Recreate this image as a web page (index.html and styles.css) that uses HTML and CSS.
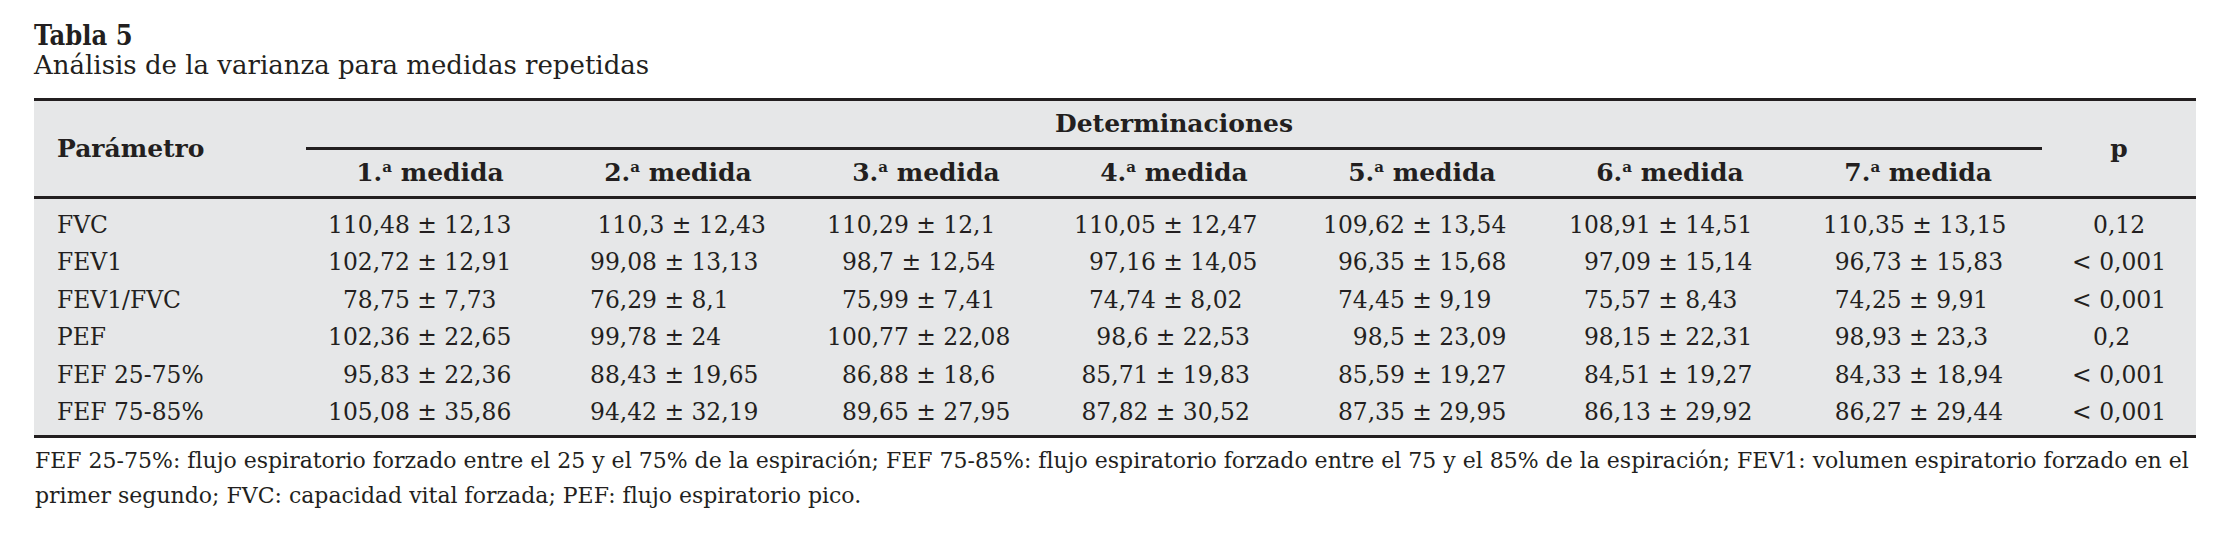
FILE: index.html
```html
<!DOCTYPE html>
<html lang="es">
<head>
<meta charset="utf-8">
<title>Tabla 5</title>
<link rel="stylesheet" href="styles.css">
</head>
<body>
<div class="page">
  <div class="caption">
    <div class="title">Tabla 5</div>
    <div class="subtitle">Análisis de la varianza para medidas repetidas</div>
  </div>
  <table class="grid">
    <colgroup>
      <col class="c-param">
      <col class="c-val"><col class="c-val"><col class="c-val"><col class="c-val"><col class="c-val"><col class="c-val"><col class="c-val">
      <col class="c-p">
    </colgroup>
    <thead>
      <tr>
        <th rowspan="2" class="param">Parámetro</th>
        <th colspan="7" class="group">Determinaciones</th>
        <th rowspan="2" class="pcol">p</th>
      </tr>
      <tr class="sub">
        <th>1.<sup>a</sup> medida</th>
        <th>2.<sup>a</sup> medida</th>
        <th>3.<sup>a</sup> medida</th>
        <th>4.<sup>a</sup> medida</th>
        <th>5.<sup>a</sup> medida</th>
        <th>6.<sup>a</sup> medida</th>
        <th>7.<sup>a</sup> medida</th>
      </tr>
    </thead>
    <tbody>
      <tr>
        <td>FVC</td>
        <td>110,48 ± 12,13</td>
        <td>&#x2008;110,3 ± 12,43</td>
        <td>110,29 ± 12,1</td>
        <td>110,05 ± 12,47</td>
        <td>109,62 ± 13,54</td>
        <td>108,91 ± 14,51</td>
        <td>110,35 ± 13,15</td>
        <td>0,12</td>
      </tr>
      <tr>
        <td>FEV1</td>
        <td>102,72 ± 12,91</td>
        <td>99,08 ± 13,13</td>
        <td>&#x2007;98,7 ± 12,54</td>
        <td>&#x2007;97,16 ± 14,05</td>
        <td>&#x2007;96,35 ± 15,68</td>
        <td>&#x2007;97,09 ± 15,14</td>
        <td>&#x2002;96,73 ± 15,83</td>
        <td>&lt; 0,001</td>
      </tr>
      <tr>
        <td>FEV1/FVC</td>
        <td>&#x2007;78,75 ± 7,73</td>
        <td>76,29 ± 8,1</td>
        <td>&#x2007;75,99 ± 7,41</td>
        <td>&#x2007;74,74 ± 8,02</td>
        <td>&#x2007;74,45 ± 9,19</td>
        <td>&#x2007;75,57 ± 8,43</td>
        <td>&#x2002;74,25 ± 9,91</td>
        <td>&lt; 0,001</td>
      </tr>
      <tr>
        <td>PEF</td>
        <td>102,36 ± 22,65</td>
        <td>99,78 ± 24</td>
        <td>100,77 ± 22,08</td>
        <td>&#x2007;&#x2008;98,6 ± 22,53</td>
        <td>&#x2007;&#x2007;98,5 ± 23,09</td>
        <td>&#x2007;98,15 ± 22,31</td>
        <td>&#x2002;98,93 ± 23,3</td>
        <td>0,2&#x2007;</td>
      </tr>
      <tr>
        <td>FEF 25-75%</td>
        <td>&#x2007;95,83 ± 22,36</td>
        <td>88,43 ± 19,65</td>
        <td>&#x2007;86,88 ± 18,6</td>
        <td>&#x2008;85,71 ± 19,83</td>
        <td>&#x2007;85,59 ± 19,27</td>
        <td>&#x2007;84,51 ± 19,27</td>
        <td>&#x2002;84,33 ± 18,94</td>
        <td>&lt; 0,001</td>
      </tr>
      <tr>
        <td>FEF 75-85%</td>
        <td>105,08 ± 35,86</td>
        <td>94,42 ± 32,19</td>
        <td>&#x2007;89,65 ± 27,95</td>
        <td>&#x2008;87,82 ± 30,52</td>
        <td>&#x2007;87,35 ± 29,95</td>
        <td>&#x2007;86,13 ± 29,92</td>
        <td>&#x2002;86,27 ± 29,44</td>
        <td>&lt; 0,001</td>
      </tr>
    </tbody>
  </table>
  <p class="note">FEF 25-75%: flujo espiratorio forzado entre el 25 y el 75% de la espiración; FEF 75-85%: flujo espiratorio forzado entre el 75 y el 85% de la espiración; FEV1: volumen espiratorio forzado en el primer segundo; FVC: capacidad vital forzada; PEF: flujo espiratorio pico.</p>
</div>
</body>
</html>
```

FILE: styles.css
```css
html, body {
  margin: 0;
  padding: 0;
  background: #ffffff;
}

body {
  font-family: "DejaVu Serif", "Liberation Serif", serif;
  color: #231f20;
}

.page {
  padding: 21px 0 0 34px;
  width: 2162px;
}

.caption {
  margin-bottom: 19px;
}

.title {
  font-size: 27px;
  font-weight: bold;
  font-stretch: semi-condensed;
  line-height: 30px;
}

.subtitle {
  font-size: 26px;
  line-height: 28px;
}

.grid {
  width: 2162px;
  table-layout: fixed;
  border-collapse: separate;
  border-spacing: 0;
  background: #e6e7e8;
  border-top: 3px solid #231f20;
  border-bottom: 3px solid #231f20;
}

.c-param { width: 272px; }
.c-val { width: 248px; }
.c-p { width: 154px; }

.grid th {
  font-size: 25px;
  font-weight: bold;
  line-height: 30px;
  padding: 8px 0;
  text-align: center;
  vertical-align: middle;
  white-space: nowrap;
}

.grid th sup {
  font-size: 0.6em;
  line-height: 0;
  vertical-align: 0.6em;
}

.grid th.param {
  text-align: left;
  padding-left: 23px;
  border-bottom: 3px solid #231f20;
}

.grid th.pcol {
  border-bottom: 3px solid #231f20;
}

.grid th.group {
  border-bottom: 3px solid #231f20;
}

.grid tr.sub th {
  border-bottom: 3px solid #231f20;
}

.grid td {
  font-size: 23.4px;
  line-height: 37.4px;
  padding: 0;
  white-space: pre;
  text-align: left;
  vertical-align: baseline;
}

.grid tbody tr:first-child td { padding-top: 8px; }
.grid tbody tr:last-child td { padding-bottom: 4px; }

.grid td:nth-child(1) { padding-left: 23px; }
.grid td:nth-child(2) { padding-left: 22px; }
.grid td:nth-child(3) { padding-left: 36px; }
.grid td:nth-child(4) { padding-left: 25px; }
.grid td:nth-child(5) { padding-left: 24px; }
.grid td:nth-child(6) { padding-left: 25px; }
.grid td:nth-child(7) { padding-left: 23px; }
.grid td:nth-child(8) { padding-left: 29px; }
.grid td:nth-child(9) { text-align: center; }

.note {
  margin: 5px 0 0 1px;
  font-size: 22px;
  line-height: 35px;
}
```
